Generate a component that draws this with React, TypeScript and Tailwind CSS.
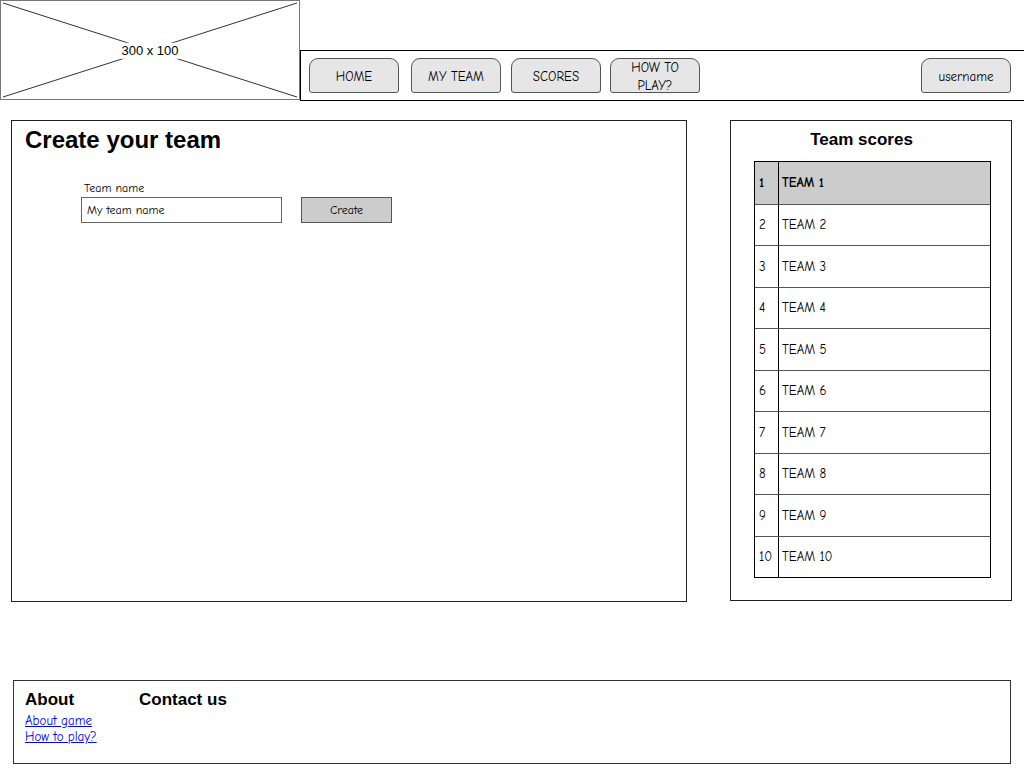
import type { ReactNode } from 'react';

const SKETCH = "font-['Comic_Sans_MS','Comic_Neue','Open_Sans',sans-serif]";
const HEAD = "font-['Liberation_Sans',Arial,sans-serif] font-bold";

const TEAMS = Array.from({ length: 10 }, (_, i) => ({ rank: i + 1, name: `TEAM ${i + 1}` }));

function NavButton({ children, className = '' }: { children: ReactNode; className?: string }) {
  return (
    <button
      type="button"
      className={`flex h-[35px] w-[90px] items-center justify-center rounded-t-[9px] rounded-b-[3px] border border-[#555] bg-[#e6e6e6] pt-[2px] text-[13px] leading-[18px] text-black ${className}`}
    >
      {children}
    </button>
  );
}

function ImagePlaceholder() {
  return (
    <div className="relative h-[100px] w-[300px] shrink-0 border border-[#777] bg-white">
      <svg className="absolute inset-0 h-full w-full" viewBox="0 0 298 98" preserveAspectRatio="none">
        <line x1="2" y1="2" x2="296" y2="96" stroke="#333" strokeWidth="1" />
        <line x1="296" y1="2" x2="2" y2="96" stroke="#333" strokeWidth="1" />
      </svg>
      <span className="absolute left-1/2 top-1/2 -translate-x-1/2 -translate-y-[45%] bg-white px-[1px] font-['Liberation_Sans',Arial,sans-serif] text-[13px] leading-[16px] text-black">
        300 x 100
      </span>
    </div>
  );
}

export default function App() {
  return (
    <div className={`h-[768px] w-[1024px] overflow-hidden bg-white text-black ${SKETCH}`}>
      <header className="flex h-[100px]">
        <ImagePlaceholder />
        <nav className="mt-[50px] flex h-[51px] flex-1 items-start border-y border-l border-black pt-[7px] pl-[8px] pr-[13px]">
          <NavButton>HOME</NavButton>
          <NavButton className="ml-[12px]">MY TEAM</NavButton>
          <NavButton className="ml-[10px]">SCORES</NavButton>
          <NavButton className="ml-[9px] flex-col pt-0">
            <span>HOW TO</span>
            <span>PLAY?</span>
          </NavButton>
          <NavButton className="ml-auto text-[12px]">username</NavButton>
        </nav>
      </header>

      <main className="mt-[20px] flex">
        <section className="ml-[11px] h-[482px] w-[676px] border border-[#222] pl-[13px] pt-[4px]">
          <h1 className={`${HEAD} text-[24px] leading-[30px]`}>Create your team</h1>
          <div className="ml-[56px] mt-[26px]">
            <label className="block pl-[3px] text-[12px] leading-[14px]">Team name</label>
            <div className="mt-[2px] flex items-center">
              <input
                type="text"
                defaultValue="My team name"
                className={`h-[26px] w-[201px] border border-[#666] bg-white px-[5px] text-[12px] text-black outline-none ${SKETCH}`}
              />
              <button
                type="button"
                className="ml-[19px] h-[26px] w-[91px] border border-[#555] bg-[#cccccc] text-[12px]"
              >
                Create
              </button>
            </div>
          </div>
        </section>

        <aside className="ml-[43px] flex h-[481px] w-[282px] flex-col border border-[#222] pt-[8px] pl-[23px]">
          <h2 className={`${HEAD} w-[215px] text-center text-[17px] leading-[22px]`}>Team scores</h2>
          <div className="mt-[10px] grid h-[417px] w-[237px] grid-rows-10 border border-black">
            {TEAMS.map((team) => (
              <div
                key={team.rank}
                className={`flex items-center text-[13px] ${team.rank > 1 ? 'border-t border-[#555]' : 'bg-[#cccccc] font-bold'}`}
              >
                <div className="flex h-full w-[24px] shrink-0 items-center border-r border-black pl-[4px]">{team.rank}</div>
                <div className="pl-[3px]">{team.name}</div>
              </div>
            ))}
          </div>
        </aside>
      </main>

      <footer className="ml-[13px] mt-[78px] flex h-[84px] w-[998px] border border-[#333] pl-[11px] pt-[8px]">
        <div className="w-[114px]">
          <h3 className={`${HEAD} text-[17px] leading-[22px]`}>About</h3>
          <div className="mt-[2px] flex flex-col text-[13px] leading-[16px]">
            <a href="#" className="w-fit text-[#0000ff] underline">About game</a>
            <a href="#" className="w-fit text-[#0000ff] underline">How to play?</a>
          </div>
        </div>
        <h3 className={`${HEAD} text-[17px] leading-[22px]`}>Contact us</h3>
      </footer>
    </div>
  );
}
